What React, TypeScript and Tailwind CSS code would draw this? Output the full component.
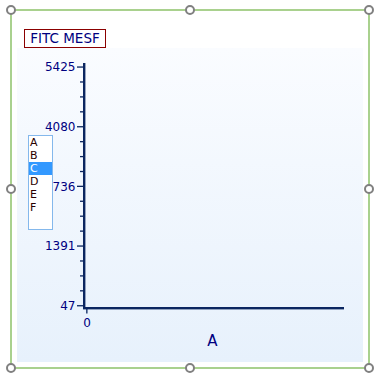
import React from "react";

const majors = [
  { v: "5425", y: 19 },
  { v: "4080", y: 78.7 },
  { v: "736", y: 138.3 },
  { v: "1391", y: 198 },
  { v: "47", y: 257.7 },
];

const step = 59.7 / 4;

function Chart() {
  const minors: number[] = [];
  for (let i = 0; i < 4; i++) {
    for (let k = 1; k < 4; k++) minors.push(majors[i].y + k * step);
  }
  return (
    <svg width="346" height="314" viewBox="0 0 346 314" className="block">
      {/* y axis */}
      <rect x="66" y="15" width="2.4" height="246" fill="#0b2660" />
      {/* x axis */}
      <rect x="66" y="259" width="261" height="2.4" fill="#0b2660" />
      {majors.map((m) => (
        <g key={m.v}>
          <rect x="60" y={m.y - 0.6} width="6" height="1.3" fill="#0b2660" />
          <text
            x="58.5"
            y={m.y + 4.3}
            textAnchor="end"
            fontFamily="'DejaVu Sans', sans-serif"
            fontSize="12"
            fill="#000080"
          >
            {m.v}
          </text>
        </g>
      ))}
      {minors.map((y, i) => (
        <rect key={i} x="63" y={y - 0.6} width="3" height="1.3" fill="#0b2660" />
      ))}
      {/* x tick */}
      <rect x="69.2" y="261" width="1.3" height="4.5" fill="#0b2660" />
      <text
        x="70"
        y="278.7"
        textAnchor="middle"
        fontFamily="'DejaVu Sans', sans-serif"
        fontSize="12"
        fill="#000080"
      >
        0
      </text>
      <text
        x="195.5"
        y="298"
        textAnchor="middle"
        fontFamily="'DejaVu Sans', sans-serif"
        fontSize="15"
        fill="#000080"
      >
        A
      </text>
    </svg>
  );
}

const items = ["A", "B", "C", "D", "E", "F"];

export default function App() {
  return (
    <div className="w-[383px] h-[384px] bg-white pt-[9px] pl-[10px]">
      <div className="relative w-[360px] h-[360px] border-2 border-[#a9d18e] p-[5px] pt-0 flex flex-col">
        <div className="h-[37px] flex items-end pl-[7px] shrink-0">
          <div
            className="w-[82px] h-[19px] border border-[#8b0000] flex items-center justify-center text-[13.5px] leading-none text-[#000080]"
            style={{ fontFamily: "'DejaVu Sans', sans-serif" }}
          >
            FITC MESF
          </div>
        </div>
        <div className="relative flex-1 bg-gradient-to-b from-[#fafcff] to-[#e7f1fc]">
          <Chart />
          <div
            className="absolute left-[11px] top-[87px] w-[25px] h-[95px] border border-[#84b8ec] bg-white flex flex-col"
            style={{ fontFamily: "'DejaVu Sans', sans-serif" }}
          >
            {items.map((it) => (
              <div
                key={it}
                className={
                  it === "C"
                    ? "h-[13px] leading-[13px] text-[11px] pl-[1px] bg-[#3399ff] text-white"
                    : "h-[13px] leading-[13px] text-[11px] pl-[1px] text-[#2a0000]"
                }
              >
                {it}
              </div>
            ))}
          </div>
        </div>
        {/* handles */}
        <div className="absolute -left-[6px] -top-[6px] w-[10px] h-[10px] rounded-full border-2 border-[#808080] bg-white" />
        <div className="absolute left-1/2 -translate-x-1/2 -top-[6px] w-[10px] h-[10px] rounded-full border-2 border-[#808080] bg-white" />
        <div className="absolute -right-[6px] -top-[6px] w-[10px] h-[10px] rounded-full border-2 border-[#808080] bg-white" />
        <div className="absolute -left-[6px] top-1/2 -translate-y-1/2 w-[10px] h-[10px] rounded-full border-2 border-[#808080] bg-white" />
        <div className="absolute -right-[6px] top-1/2 -translate-y-1/2 w-[10px] h-[10px] rounded-full border-2 border-[#808080] bg-white" />
        <div className="absolute -left-[6px] -bottom-[6px] w-[10px] h-[10px] rounded-full border-2 border-[#808080] bg-white" />
        <div className="absolute left-1/2 -translate-x-1/2 -bottom-[6px] w-[10px] h-[10px] rounded-full border-2 border-[#808080] bg-white" />
        <div className="absolute -right-[6px] -bottom-[6px] w-[10px] h-[10px] rounded-full border-2 border-[#808080] bg-white" />
      </div>
    </div>
  );
}
